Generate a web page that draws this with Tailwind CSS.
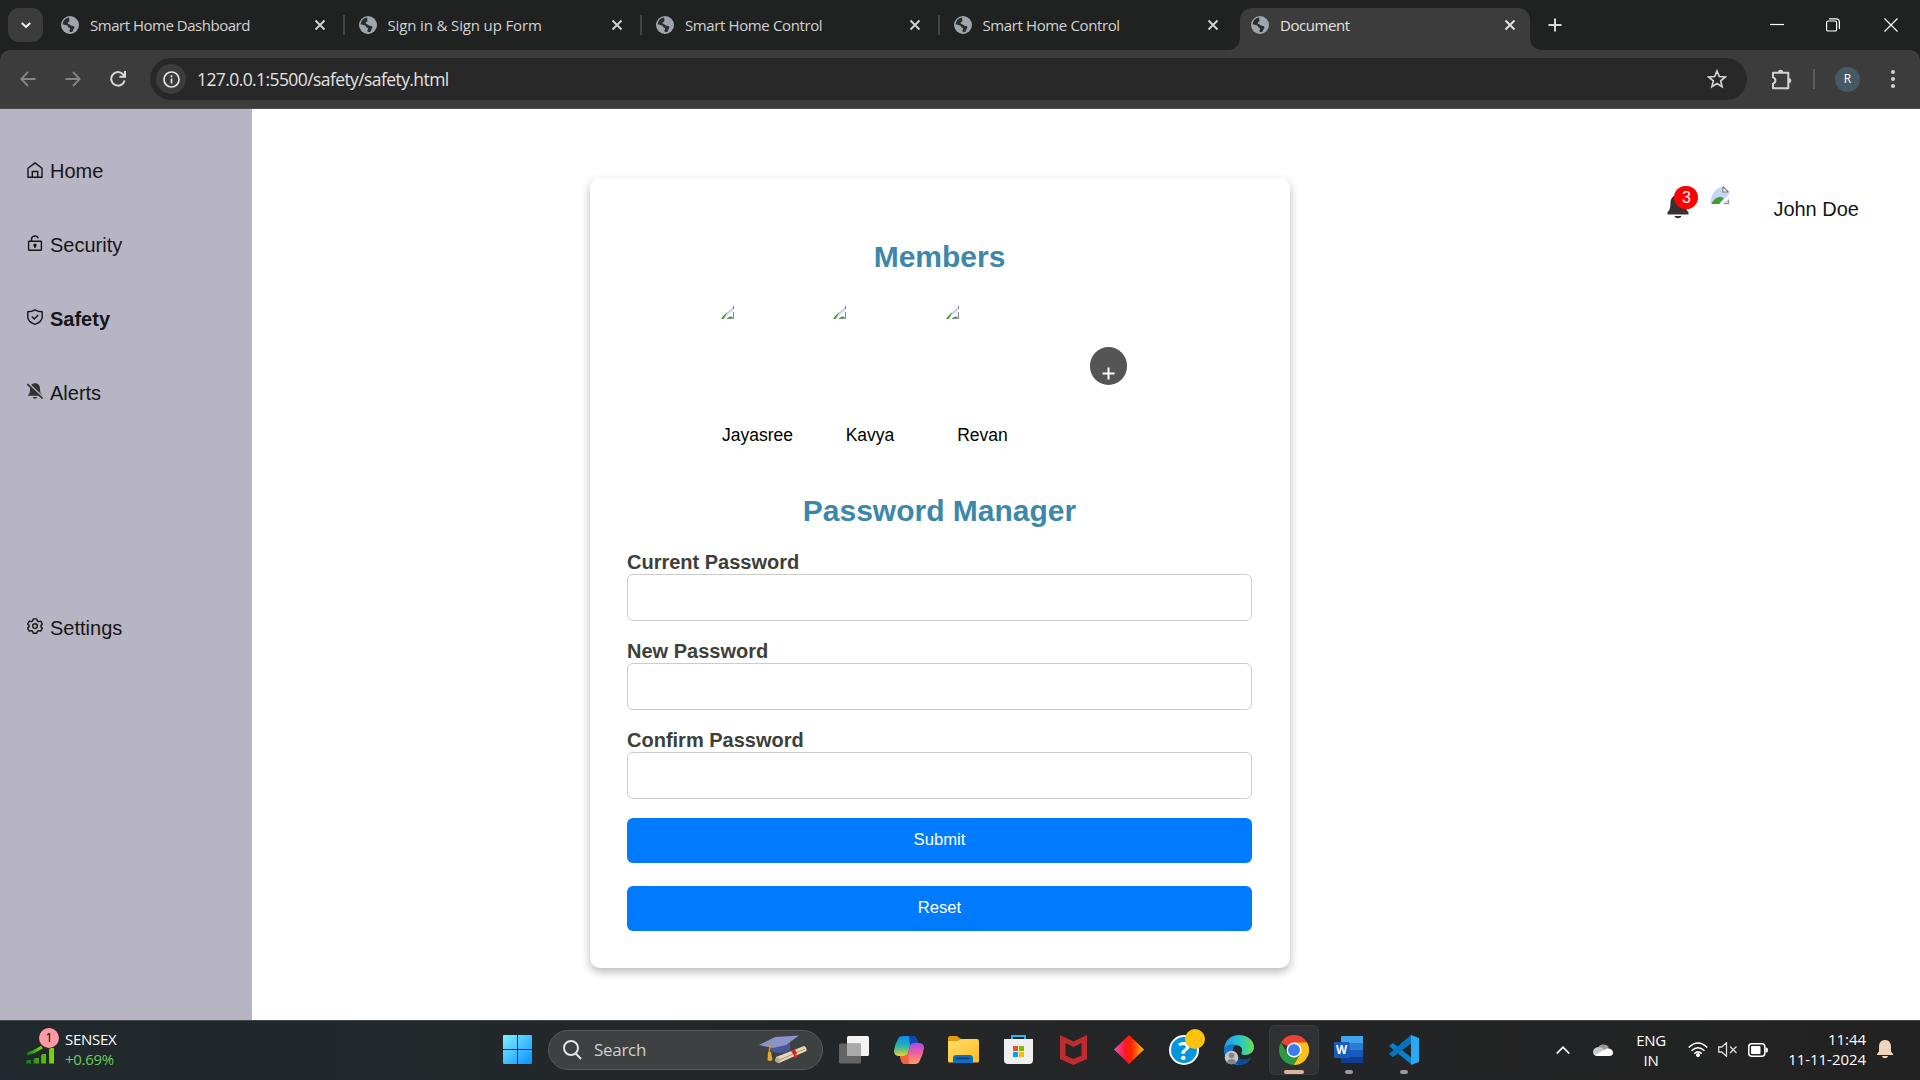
<!DOCTYPE html>
<html lang="en">
<head>
<meta charset="utf-8">
<title>Document</title>
<script src="https://cdn.jsdelivr.net/npm/@tailwindcss/browser@4"></script>
</head>
<body class="w-[1920px] h-[1080px] overflow-hidden bg-white font-['Liberation_Sans',sans-serif] flex flex-col">

<svg class="hidden">
  <symbol id="globe" viewBox="0 0 18 18"><circle cx="9" cy="9" r="9" fill="#9fa5ad"/><path d="M8.2 1.6C4.4 2 1.7 5 1.7 8.6c1.6.9 3.6.4 4.6 1 .9.5.3 1.500 1.300 2 .9.400 1.600 .300 1.500 1.300-.1.800-.9 1.300-.7 2.200.2.900 1.500 1.100 2.700.800 1.200-.900.900-2.300 1.700-3.200.6-.7 1-1.400.3-2.100-1.100-1-3.300-.4-3.900-1.600-.4-1-1.700-.7-2.400-1.500-.5-.7.300-1.500 1.100-1.800.8-.3.600-1.300.300-2.100-.2-.9.300-1.400 0-2Z" fill="#2b2d2f"/><path d="M11 2.200c-.5 1.300-.2 2.400.8 2.600 1.200.2 1.100 1.300 2.200 1.700.8.300 1.600-.1 2-.7" fill="none" stroke="#9fa5ad"/></symbol>
  <symbol id="x" viewBox="0 0 12 12"><path d="M1.500 1.500l9 9M10.500 1.500l-9 9" stroke="currentColor" stroke-width="1.900" fill="none"/></symbol>
  <symbol id="broken" viewBox="0 0 20 20"><path d="M0 19C0 9 5 2 13 .5L19.500 7V19Z" fill="#c6d6f5"/><path d="M1 19c3-7 9-9 13-6l-5 6Z" fill="#3f9e2c"/><path d="M19.500 9L9 19.500h3.500L19.500 13Z" fill="#fff"/><path d="M19 14.500V18.500H14" fill="none" stroke="#999" stroke-width="1.300"/><path d="M13 .8v5.500h6M13 .8l6 5.500" fill="#fff" stroke="#777" stroke-width="1.100"/></symbol>
  <symbol id="brokenSmall" viewBox="0 0 13 13"><path d="M4 8L13 0v4L8 9Z" fill="#c6d6f5"/><path d="M0 13C1.500 11 4 8 6.500 6L3 13Z" fill="#2f9a20"/><path d="M2 13L13 3.500v2.500L5.500 13Z" fill="#fff"/><path d="M6.500 13c1-2.500 3-3 5-2v2Z" fill="#3f9e2c"/><path d="M12.500 6v6.500H6M12.500 0v3" fill="none" stroke="#888" stroke-width="1"/></symbol>
</svg>

<!-- Tab strip -->
<header class="h-[50px] shrink-0 bg-[#202221] flex items-center text-[15px] text-[#d2d2d2] font-['Open_Sans',sans-serif]">
  <div class="ml-2 w-[35px] h-[34px] rounded-[11px] bg-[#3c3c3c] flex items-center justify-center"><svg class="w-3 h-3" viewBox="0 0 12 12"><path d="M1.800 4L6 8l4.200-4" stroke="#fff" stroke-width="1.900" fill="none"/></svg></div>
  <div class="ml-[4px] w-[297.500px] h-5 pl-[14px] pr-[17px] border-r-2 border-[#434545] flex items-center"><svg class="w-[18px] h-[18px] mr-[11px]"><use href="#globe"/></svg><span class="flex-1 tracking-[-0.480px]">Smart Home Dashboard</span><svg class="w-3 h-3"><use href="#x"/></svg></div>
  <div class="w-[297.500px] h-5 pl-[14px] pr-[17px] border-r-2 border-[#434545] flex items-center"><svg class="w-[18px] h-[18px] mr-[11px]"><use href="#globe"/></svg><span class="flex-1 tracking-[-0.140px]">Sign in &amp; Sign up Form</span><svg class="w-3 h-3"><use href="#x"/></svg></div>
  <div class="w-[297.500px] h-5 pl-[14px] pr-[17px] border-r-2 border-[#434545] flex items-center"><svg class="w-[18px] h-[18px] mr-[11px]"><use href="#globe"/></svg><span class="flex-1 tracking-[-0.380px]">Smart Home Control</span><svg class="w-3 h-3"><use href="#x"/></svg></div>
  <div class="w-[297px] h-5 pl-[14px] pr-[18px] flex items-center"><svg class="w-[18px] h-[18px] mr-[11px]"><use href="#globe"/></svg><span class="flex-1 tracking-[-0.380px]">Smart Home Control</span><svg class="w-3 h-3"><use href="#x"/></svg></div>
  <div class="relative self-end ml-[3.500px] w-[290px] h-[42px] pb-[8px] pl-[11px] pr-[14px] rounded-t-xl bg-[#3c3c3c] flex items-center text-[#e3e3e3]">
    <svg class="absolute -left-3 bottom-0 w-3 h-3" viewBox="0 0 12 12"><path d="M12 0V12H0A12 12 0 0 0 12 0Z" fill="#3c3c3c"/></svg>
    <svg class="absolute -right-3 bottom-0 w-3 h-3" viewBox="0 0 12 12"><path d="M0 0V12H12A12 12 0 0 1 0 0Z" fill="#3c3c3c"/></svg>
    <svg class="w-[18px] h-[18px] mr-[11px]"><use href="#globe"/></svg><span class="flex-1 tracking-[-0.450px]">Document</span><svg class="w-3 h-3"><use href="#x"/></svg>
  </div>
  <svg class="ml-[18px] w-[14px] h-[14px]" viewBox="0 0 14 14"><path d="M7 0.500v13M.5 7h13" stroke="#d8d8d8" stroke-width="2"/></svg>
  <div class="flex-1"></div>
  <div class="flex items-center pr-[22px]">
    <svg class="w-[14px] h-[14px]" viewBox="0 0 14 14"><path d="M0 6.500h14" stroke="#fff" stroke-width="1.200"/></svg>
    <svg class="ml-[42px] w-[14px] h-[14px]" viewBox="0 0 14 14" fill="none" stroke="#fff" stroke-width="1.200"><rect x=".6" y="3" width="10" height="10" rx="1.600"/><path d="M3 .8h7.400a3 3 0 0 1 3 3V11"/></svg>
    <svg class="ml-[44px] w-[14px] h-[14px]" viewBox="0 0 14 14"><path d="M.5.5l13 13M13.500.5l-13 13" stroke="#fff" stroke-width="1.200"/></svg>
  </div>
</header>

<!-- Toolbar -->
<div class="h-[59px] shrink-0 bg-[#202221]">
<div class="h-full rounded-t-[10px] bg-[#3c3c3c] border-b border-[#4c4c4c] flex items-center">
  <svg class="ml-5 w-4 h-4" viewBox="0 0 16 16" fill="none" stroke="#858585" stroke-width="1.800"><path d="M15.500 8H1.500M8 1L1.200 8 8 15"/></svg>
  <svg class="ml-[29px] w-4 h-4" viewBox="0 0 16 16" fill="none" stroke="#858585" stroke-width="1.800"><path d="M.5 8h14M8 1l6.800 7L8 15"/></svg>
  <svg class="ml-[29px] w-4 h-4" viewBox="0 0 16 16" fill="none" stroke="#d8d8d8" stroke-width="2"><path d="M14.600 9.500A6.800 6.800 0 1 1 13 3.200L15 5.300M15 0v5.700H9.300"/></svg>
  <div class="ml-[24px] w-[1597px] h-[42px] rounded-full bg-[#282828] flex items-center pl-[6px] pr-[20px]">
    <div class="w-[30px] h-[30px] rounded-full bg-[#3c3c3c] flex items-center justify-center"><svg class="w-[17px] h-[17px]" viewBox="0 0 17 17"><circle cx="8.500" cy="8.500" r="7.500" fill="none" stroke="#e3e3e3" stroke-width="1.700"/><path d="M8.500 7.500v5M8.500 4.300v1.900" stroke="#e3e3e3" stroke-width="1.700"/></svg></div>
    <span class="ml-[11px] flex-1 font-['Open_Sans',sans-serif] text-[17.500px] tracking-[-0.590px] text-[#e3e3e3]">127.0.0.1:5500/safety/safety.html</span>
    <svg class="w-5 h-5" viewBox="0 0 20 20"><path d="M10 2l2.300 5.500 6 .5-4.600 3.900 1.400 5.800L10 14.600l-5.100 3.100 1.400-5.800L1.700 8l6-.5Z" fill="none" stroke="#d2d2d2" stroke-width="1.700"/></svg>
  </div>
  <svg class="ml-[23px] w-[23px] h-[23px]" viewBox="0 0 23 23"><path d="M3 4.800h15.300v15.400H3v-4.600c3.200-1 3.200-5.200 0-6.200Z" fill="none" stroke="#d2d2d2" stroke-width="2" stroke-linejoin="round"/><path d="M8 4.500a2.600 2.800 0 0 1 5.200 0M18.500 10a2.800 2.600 0 0 1 0 5.200" fill="#d2d2d2"/></svg>
  <div class="ml-[20px] w-[2px] h-5 bg-[#5c5c5c]"></div>
  <div class="ml-[20px] w-[25px] h-[25px] rounded-full bg-[#455a64] text-white text-[12px] font-['Open_Sans',sans-serif] flex items-center justify-center">R</div>
  <svg class="ml-[30px] w-[6px] h-[18px]" viewBox="0 0 6 18" fill="#d2d2d2"><circle cx="3" cy="2" r="2"/><circle cx="3" cy="9" r="2"/><circle cx="3" cy="16" r="2"/></svg>
</div>
</div>

<!-- Page -->
<main class="flex-1 flex min-h-0">
  <nav class="w-[252px] bg-[#b7b4c3] pt-[50px] pl-[27px] flex flex-col text-xl leading-6 text-[#161616]">
    <a class="h-[74px] flex gap-[7px]"><svg class="mt-[3px] w-4 h-4" viewBox="0 0 16 16" fill="none" stroke="currentColor" stroke-width="1.400"><path d="M1 6.200L8 .9l7 5.300v9H1Z" stroke-linejoin="round"/><path d="M5.300 15V9.500h5.400V15"/></svg>Home</a>
    <a class="h-[74px] flex gap-[7px]"><svg class="mt-[2px] w-4 h-4" viewBox="0 0 16 16" fill="none" stroke="currentColor" stroke-width="1.400"><rect x="1.600" y="6.200" width="12.800" height="9" rx=".6"/><path d="M4.500 6V4.300a3.500 3.500 0 0 1 6.800-1M8 10.500V13"/><circle cx="8" cy="10.300" r="1" fill="currentColor"/></svg>Security</a>
    <a class="h-[74px] flex gap-[7px] font-bold"><svg class="mt-[2px] w-4 h-4" viewBox="0 0 16 16" fill="none" stroke="currentColor" stroke-width="1.400"><path d="M8 .8c2.200 1.400 4.500 2 7.200 2V8c0 3.500-3.500 6-7.200 7.300C4.300 14 .8 11.500.8 8V2.800C3.500 2.800 5.800 2.200 8 .8Z" stroke-linejoin="round"/><path d="M4.800 7.600l2.400 2.300 4-4"/></svg>Safety</a>
    <a class="h-[235px] flex gap-[7px]"><svg class="mt-[2px] w-4 h-4" viewBox="0 0 16 16"><path d="M8 .3c3.500 0 5 2.500 5 5.500 0 4 1.200 5.500 2.500 7H.6C2 11 3 10 3 6 3 2.500 4.800.3 8 .3ZM6 14h4c0 2.300-4 2.300-4 0Z" fill="#333"/><path d="M1.200.2l15 14.200" stroke="#b7b4c3" stroke-width="1.600"/><path d="M.3 1l15.300 14.500" stroke="#333" stroke-width="1.700"/></svg>Alerts</a>
    <a class="flex gap-[7px]"><svg class="mt-[2px] w-4 h-4" viewBox="0 0 16 16" fill="none" stroke="currentColor" stroke-width="1.400"><path d="M6.300.9h3.400l.6 2 1.300.8 2.100-.6 1.700 2.900L13.900 7.500v1.200l1.500 1.500-1.700 2.900-2.100-.5-1.300.8-.6 1.900H6.300l-.6-1.900-1.300-.8-2.100.5L.6 10.200l1.500-1.500V7.500L.6 6l1.700-2.900 2.100.6 1.300-.8Z" stroke-linejoin="round"/><circle cx="8" cy="8.100" r="2.300"/></svg>Settings</a>
  </nav>

  <section class="flex-1 flex justify-between pl-[338px] pr-[61px]">
    <div class="mt-[69px] w-[700px] h-[790px] pl-[37px] pr-[38px] rounded-[10px] bg-white shadow-[0_4px_10px_rgba(0,0,0,0.28)] flex flex-col">
      <h2 class="mt-[62px] h-[34px] leading-[34px] text-center text-[30px] font-bold text-[#3d88aa]">Members</h2>
      <div class="mt-[32px] ml-[93px] flex gap-[37.500px] text-[17.500px] text-black">
        <div class="w-[75px] flex flex-col"><svg class="w-[13px] h-[13px] ml-px"><use href="#brokenSmall"/></svg><span class="mt-[106px] leading-5 text-center">Jayasree</span></div>
        <div class="w-[75px] flex flex-col"><svg class="w-[13px] h-[13px]"><use href="#brokenSmall"/></svg><span class="mt-[106px] leading-5 text-center">Kavya</span></div>
        <div class="w-[75px] flex flex-col"><svg class="w-[13px] h-[13px] ml-px"><use href="#brokenSmall"/></svg><span class="mt-[106px] leading-5 text-center">Revan</span></div>
        <div class="ml-[32px] mt-[41px] w-[37.500px] h-[37.500px] rounded-full bg-[#555] flex items-center justify-center"><svg class="mt-4 ml-px w-[13px] h-[13px]" viewBox="0 0 13 13"><path d="M6.500.5v12M.5 6.500h12" stroke="#fff" stroke-width="2"/></svg></div>
      </div>
      <h2 class="mt-[49px] h-[34px] leading-[34px] text-center text-[30px] font-bold text-[#3d88aa]">Password Manager</h2>
      <form class="mt-[22px] flex flex-col text-[#3c3f3b]">
        <label class="h-[24px] leading-6 text-xl font-bold">Current Password</label>
        <input class="h-[47px] border border-[#ccc] rounded-[6px]" type="password">
        <label class="mt-[18px] h-[24px] leading-6 text-xl font-bold">New Password</label>
        <input class="h-[47px] border border-[#ccc] rounded-[6px]" type="password">
        <label class="mt-[18px] h-[24px] leading-6 text-xl font-bold">Confirm Password</label>
        <input class="h-[47px] border border-[#ccc] rounded-[6px]" type="password">
        <button type="button" class="mt-[19px] h-[45px] pb-[2px] rounded-[6px] bg-[#007bff] text-white text-[16.670px]">Submit</button>
        <button type="button" class="mt-[23px] h-[45px] pb-[2px] rounded-[6px] bg-[#007bff] text-white text-[16.670px]">Reset</button>
      </form>
    </div>
    <div class="mt-[77px] h-12 flex items-start">
      <div class="relative w-[22px] h-8"><svg class="absolute left-0 top-[9px] w-[22px] h-[24px]" viewBox="0 0 22 24"><path d="M11 0c5 0 7.500 3.500 7.500 8 0 5 1 7.500 3 9v2.500H.5V17c2-1.500 3-4 3-9C3.500 3.500 6 0 11 0ZM7.500 21h7c-1 3-6 3-7 0Z" fill="#333"/></svg>
        <span class="absolute left-[7px] top-0 w-6 h-[23px] rounded-full bg-[#f00] text-white text-base leading-[23px] text-center">3</span></div>
      <svg class="ml-[21px] w-5 h-[19px]" preserveAspectRatio="none"><use href="#broken"/></svg>
      <span class="ml-[43px] mt-[11px] leading-6 text-xl text-[#161616]">John Doe</span>
    </div>
  </section>
</main>

<!-- Taskbar -->
<footer class="h-[60px] shrink-0 pb-[2px] bg-linear-to-r from-[#20292d] via-[#242628] to-[#222] border-t border-[#44484a] flex items-center text-white font-['Open_Sans',sans-serif]">
  <div class="relative ml-[26px] w-[34px] h-10">
    <svg class="absolute left-0 top-[15px] w-7 h-5" viewBox="0 0 28 20"><defs><linearGradient id="gr"><stop stop-color="#0f7a1e"/><stop offset="1" stop-color="#7fd80c"/></linearGradient></defs><path d="M0 16.500q0-1.500 2-1.500h3v3.500H0ZM7.500 14.500q0-1.500 2-1.500h3.500v5.500H7.500ZM15 11.500q0-2.500 2-2.500h3v9.500H15ZM23 4.500q0-1.500 2-1.500h3v15.500H23Z" fill="url(#gr)"/><path d="M1 9Q9 7 16 2" stroke="url(#gr)" stroke-width="3.200" fill="none"/></svg>
    <span class="absolute left-[13px] -top-[2px] w-5 h-5 rounded-full bg-[#ff99a4] text-black text-[12.500px] leading-5 text-center">1</span>
  </div>
  <div class="ml-[5px] pb-[2px] w-20 text-[15px] leading-5 tracking-[-0.3px]"><div>SENSEX</div><div class="text-[#6ccb5f]">+0.69%</div></div>
  <svg class="ml-[358px] w-[29px] h-[29px]" viewBox="0 0 29 29"><defs><linearGradient id="win" x2="1" y2="1"><stop stop-color="#7df2ff"/><stop offset="1" stop-color="#0a8fff"/></linearGradient></defs><path d="M0 1q0-1 1-1h13v14H0ZM15 0h13q1 0 1 1v13H15ZM0 15h14v14H1q-1 0-1-1ZM15 15h14v13q0 1-1 1H15Z" fill="url(#win)"/></svg>
  <div class="ml-4 w-[275px] h-10 rounded-full bg-[#3e4142] border border-[#58595a] flex items-center pl-[14px] pr-[15px]">
    <svg class="w-[19px] h-[20px]" viewBox="0 0 19 20" fill="none" stroke="#e4e4e4" stroke-width="2"><circle cx="8" cy="8" r="7"/><path d="M12.800 13.500L18 19"/></svg>
    <span class="ml-[12px] flex-1 text-[17px] tracking-[-0.3px] text-[#d0d0d0]">Search</span>
    <svg class="w-[48px] h-[30px]" viewBox="0 0 48 30"><path d="M12 9v7q8 4 19 0V7Z" fill="#4b5796"/><path d="M0 10L16 2l24-1.500L27 10l-13 3Z" fill="#8b93cd"/><path d="M13 9q-3 2-2.500 9v7" fill="none" stroke="#c99a2c" stroke-width="1.600"/><path d="M9 17h3l1.500 8q-3 2-5 0Z" fill="#e0ab35"/><path d="M17 22l28-11q3 1 2.500 5L20 28q-4-1-3-6Z" fill="#e4d6b6"/><path d="M18 26l28-12" stroke="#a99773"/><circle cx="18.500" cy="25" r="2.500" fill="#b9a780"/><path d="M32 16l4-2 2 5-3 1.500ZM35 19l4 3-4 1Z" fill="#d22"/></svg>
  </div>
  <svg class="ml-[16px] w-[30px] h-[29px]" viewBox="0 0 30 29"><rect x="8" y="1" width="22" height="20" rx="1.500" fill="#f3f3f3"/><rect y="8.500" width="22" height="20" rx="1.500" fill="#707070" fill-opacity=".85"/><path d="M8 8.500h14V21H8Z" fill="#aaa"/></svg>
  <svg class="ml-[25px] w-[30px] h-[28px]" viewBox="0 0 30 28"><defs><linearGradient id="c1" x2="0" y2="1"><stop stop-color="#128be8"/><stop offset=".5" stop-color="#25b3b0"/><stop offset="1" stop-color="#e5d428"/></linearGradient><linearGradient id="c2" x2="0" y2="1"><stop stop-color="#a64bf0"/><stop offset=".5" stop-color="#f0609a"/><stop offset="1" stop-color="#ffa45a"/></linearGradient></defs><path d="M9 0h10q3 0 4 4l1 3h-5q-2 0-3 3l-2 7q-1 3-4 3H5q-5 0-5-5 1-7 4-12Q5 0 9 0Z" fill="url(#c1)"/><path d="M15 0h4q3 0 4 4l1 3h-5q-2 0-3 3Z" fill="#1546b8"/><path d="M21 28H11q-3 0-4-4l-1-4h5q2 0 3-3l2-7q1-3 4-3h5q5 0 5 5-1 7-4 12-1 4-5 4Z" fill="url(#c2)"/><path d="M15 28h-4q-3 0-4-4l-1-4h5q2 0 3-3Z" fill="#f5623a"/></svg>
  <svg class="ml-[24px] w-[31px] h-[27px]" viewBox="0 0 31 27"><defs><linearGradient id="fo" x2="1" y2="1"><stop stop-color="#ffdc6b"/><stop offset="1" stop-color="#ffbd20"/></linearGradient></defs><path d="M0 2q0-2 2-2h7l4 3v5H0Z" fill="#e09c0e"/><path d="M0 5h10l3-2h16q2 0 2 2v20q0 1.500-1.500 1.500H1.500Q0 26.500 0 25Z" fill="url(#fo)"/><path d="M5 27v-5q0-3 3-3h14q3 0 3 3v5Z" fill="#0d6fc0"/><path d="M9 22.500h12" stroke="#063b78" stroke-width="1.400" stroke-linecap="round"/></svg>
  <svg class="ml-[25px] w-[29px] h-[29px]" viewBox="0 0 29 29"><path d="M8 6V1h13v5" fill="none" stroke="#2cb5ee" stroke-width="2"/><path d="M0 4h29v21q0 4-4 4H4q-4 0-4-4Z" fill="#efefef"/><path fill="#f25022" d="M9 11h5v5H9Z"/><path fill="#7fba00" d="M15 11h5v5h-5Z"/><path fill="#00a4ef" d="M9 17h5v5H9Z"/><path fill="#ffb900" d="M15 17h5v5h-5Z"/></svg>
  <svg class="ml-[27px] w-[27px] h-[30px]" viewBox="0 0 27 30"><path d="M0 0l13.500 6.500L27 0v24l-13.500 6L0 24ZM5.500 8v12.500l8 3.500 8-3.500V8l-8 4Z" fill="#bf2c30"/></svg>
  <svg class="ml-[27px] w-[30px] h-[29px]" viewBox="0 0 30 29"><defs><linearGradient id="di"><stop stop-color="#f050c0"/><stop offset=".4" stop-color="#ff1520"/><stop offset=".6" stop-color="#ff2a00"/><stop offset="1" stop-color="#ffc020"/></linearGradient></defs><path d="M15 0l15 14.500L15 29 0 14.500Z" fill="url(#di)"/></svg>
  <div class="relative ml-[25px] w-[30px] h-[30px] rounded-full bg-[#0096dc] border-2 border-white text-white font-bold text-[25px] leading-[26px] text-center">?<span class="absolute left-[14px] -top-2 w-5 h-5 rounded-full bg-[#ffc20e]"></span></div>
  <svg class="ml-[25px] w-[30px] h-[30px]" viewBox="0 0 30 30"><defs><linearGradient id="ed"><stop stop-color="#1e9be8"/><stop offset=".5" stop-color="#27c3cf"/><stop offset="1" stop-color="#6be04b"/></linearGradient></defs><path d="M0 14C1 5 7 0 15 0c9 0 15 6 15 12 0 5-4 8-9 8-4 0-4-2-3-4 1-3-2-6-7-6S2 11 0 14Z" fill="url(#ed)"/><path d="M0 14c2-4 7-6 12-4-4 2-4 8-1 12s9 6 16 1c-3 5-7 7-12 7C6 30-1 23 0 14Z" fill="#1275c8"/><path d="M10 16c0 8 9 10 17 7-3 5-7 7-12 7-6-2-8-9-5-14Z" fill="#124a91"/><circle cx="7.500" cy="22.500" r="6.800" fill="#c5c5c3"/><circle cx="7.500" cy="20.500" r="2.800" fill="#858585"/><path d="M3 28q0-4 4.500-4t4.500 4q-4 2.500-9 0Z" fill="#858585"/></svg>
  <div class="relative ml-[15px] w-[50px] h-[50px] rounded-md bg-[#303132] border border-[#3a3b3c] flex items-center justify-center">
    <svg class="w-[30px] h-[30px]" viewBox="0 0 30 30"><path d="M15 15L2 7.500A15 15 0 0 1 28 7.500Z" fill="#ea4335"/><path d="M15 15V7.500H28A15 15 0 0 1 14.500 30L21.500 18.500Z" fill="#fbc116"/><path d="M2 7.500A15 15 0 0 0 14.500 30l7-11.500L15 15 8.500 18.700Z" fill="#2b9a47"/><circle cx="15" cy="15" r="7.500" fill="#fff"/><circle cx="15" cy="15" r="6" fill="#3b7ded"/></svg>
    <span class="absolute left-[14px] bottom-0 w-5 h-1 rounded-full bg-[#dbb59c]"></span>
  </div>
  <div class="relative ml-[15px] w-[29px] h-[27px]">
    <svg class="w-[29px] h-[27px]" viewBox="0 0 29 27"><path d="M7 1q0-1 1-1h21v7H7Z" fill="#41a5ee"/><path d="M7 7h22v7H7Z" fill="#2b7cd3"/><path d="M7 14h22v7H7Z" fill="#185abd"/><path d="M7 21h22v6H8q-1 0-1-1Z" fill="#103f91"/><rect y="6" width="15.500" height="16" rx="1" fill="#185abd"/></svg>
    <span class="absolute left-0 top-[6px] w-[15px] text-center leading-4 text-[11.500px] font-bold">W</span>
    <span class="absolute left-[11px] -bottom-[11px] w-2 h-1 rounded-full bg-[#999]"></span>
  </div>
  <div class="relative ml-[26px] w-[30px] h-[30px]">
    <svg class="w-[30px] h-[30px]" viewBox="0 0 30 30"><path d="M22 8L4 22 0 19 22 0Z" fill="#0065a9"/><path d="M0 11l4-3 19 15v7Z" fill="#0b80cd"/><path d="M0 19L22 0v8.500L4 22Z" fill="#0873bd"/><path d="M22 0l8 3v24l-8 3Z" fill="#28a9f2"/></svg>
    <span class="absolute left-[11px] -bottom-[9px] w-2 h-1 rounded-full bg-[#999]"></span>
  </div>
  <div class="flex-1"></div>
  <svg class="w-[14px] h-2" viewBox="0 0 14 8"><path d="M.7 7.500L7 1.200l6.300 6.300" fill="none" stroke="#fff" stroke-width="1.700"/></svg>
  <svg class="ml-[23px] w-5 h-[13px]" viewBox="0 0 20 13"><path d="M5 5a6 5 0 0 1 11-1l-6 4Z" fill="#999"/><path d="M4.500 13Q0 13 0 9t5-5q4 0 7 4Z" fill="#c9c9c9"/><path d="M2 12L12 6.500q2-2 5-.8 3 1 3 4Q20 13 16 13H4.500Q3 13 2 12Z" fill="#fff"/></svg>
  <div class="ml-[23px] w-[30px] text-center text-[15px] leading-5 tracking-[-0.3px]">ENG<br>IN</div>
  <svg class="ml-[22px] w-5 h-[15px]" viewBox="0 0 20 15" fill="none" stroke="#fff" stroke-width="1.500"><path d="M.7 5.500Q10-3.600 19.300 5.500M3.500 8.700q6.500-6 13 0M6.300 11.600q3.700-3.400 7.400 0"/><circle cx="10" cy="13" r="1.300" fill="#fff"/></svg>
  <svg class="ml-[10px] w-5 h-[15px]" viewBox="0 0 20 15" fill="none" stroke="#ddd" stroke-width="1.300"><path d="M.7 5h3L8.500.8v13.400L3.700 10h-3ZM12 4.500l6.500 6.500M18.500 4.500L12 11"/></svg>
  <svg class="ml-[10px] w-5 h-[14px]" viewBox="0 0 20 14"><rect x=".8" y=".8" width="16" height="12.400" rx="3" fill="none" stroke="#fff" stroke-width="1.500"/><rect x="3" y="3" width="9.500" height="8" rx="1" fill="#fff"/><path d="M17.500 4.500h1q1.500 0 1.500 2.500t-1.500 2.500h-1Z" fill="#fff"/></svg>
  <div class="ml-[10px] pb-[2px] w-[88px] text-right text-[15px] leading-5 tracking-[-0.050px]">11:44<br>11-11-2024</div>
  <svg class="ml-[11px] mr-[27px] w-4 h-[19px]" viewBox="0 0 16 19"><path d="M8 0c4.500 0 6 3.500 6 7v4.500l2 2.500v1H0v-1l2-2.500V7c0-3.500 1.500-7 6-7ZM5 16h6c-.5 3-5.500 3-6 0Z" fill="#efd3bb"/></svg>
</footer>
</body>
</html>
